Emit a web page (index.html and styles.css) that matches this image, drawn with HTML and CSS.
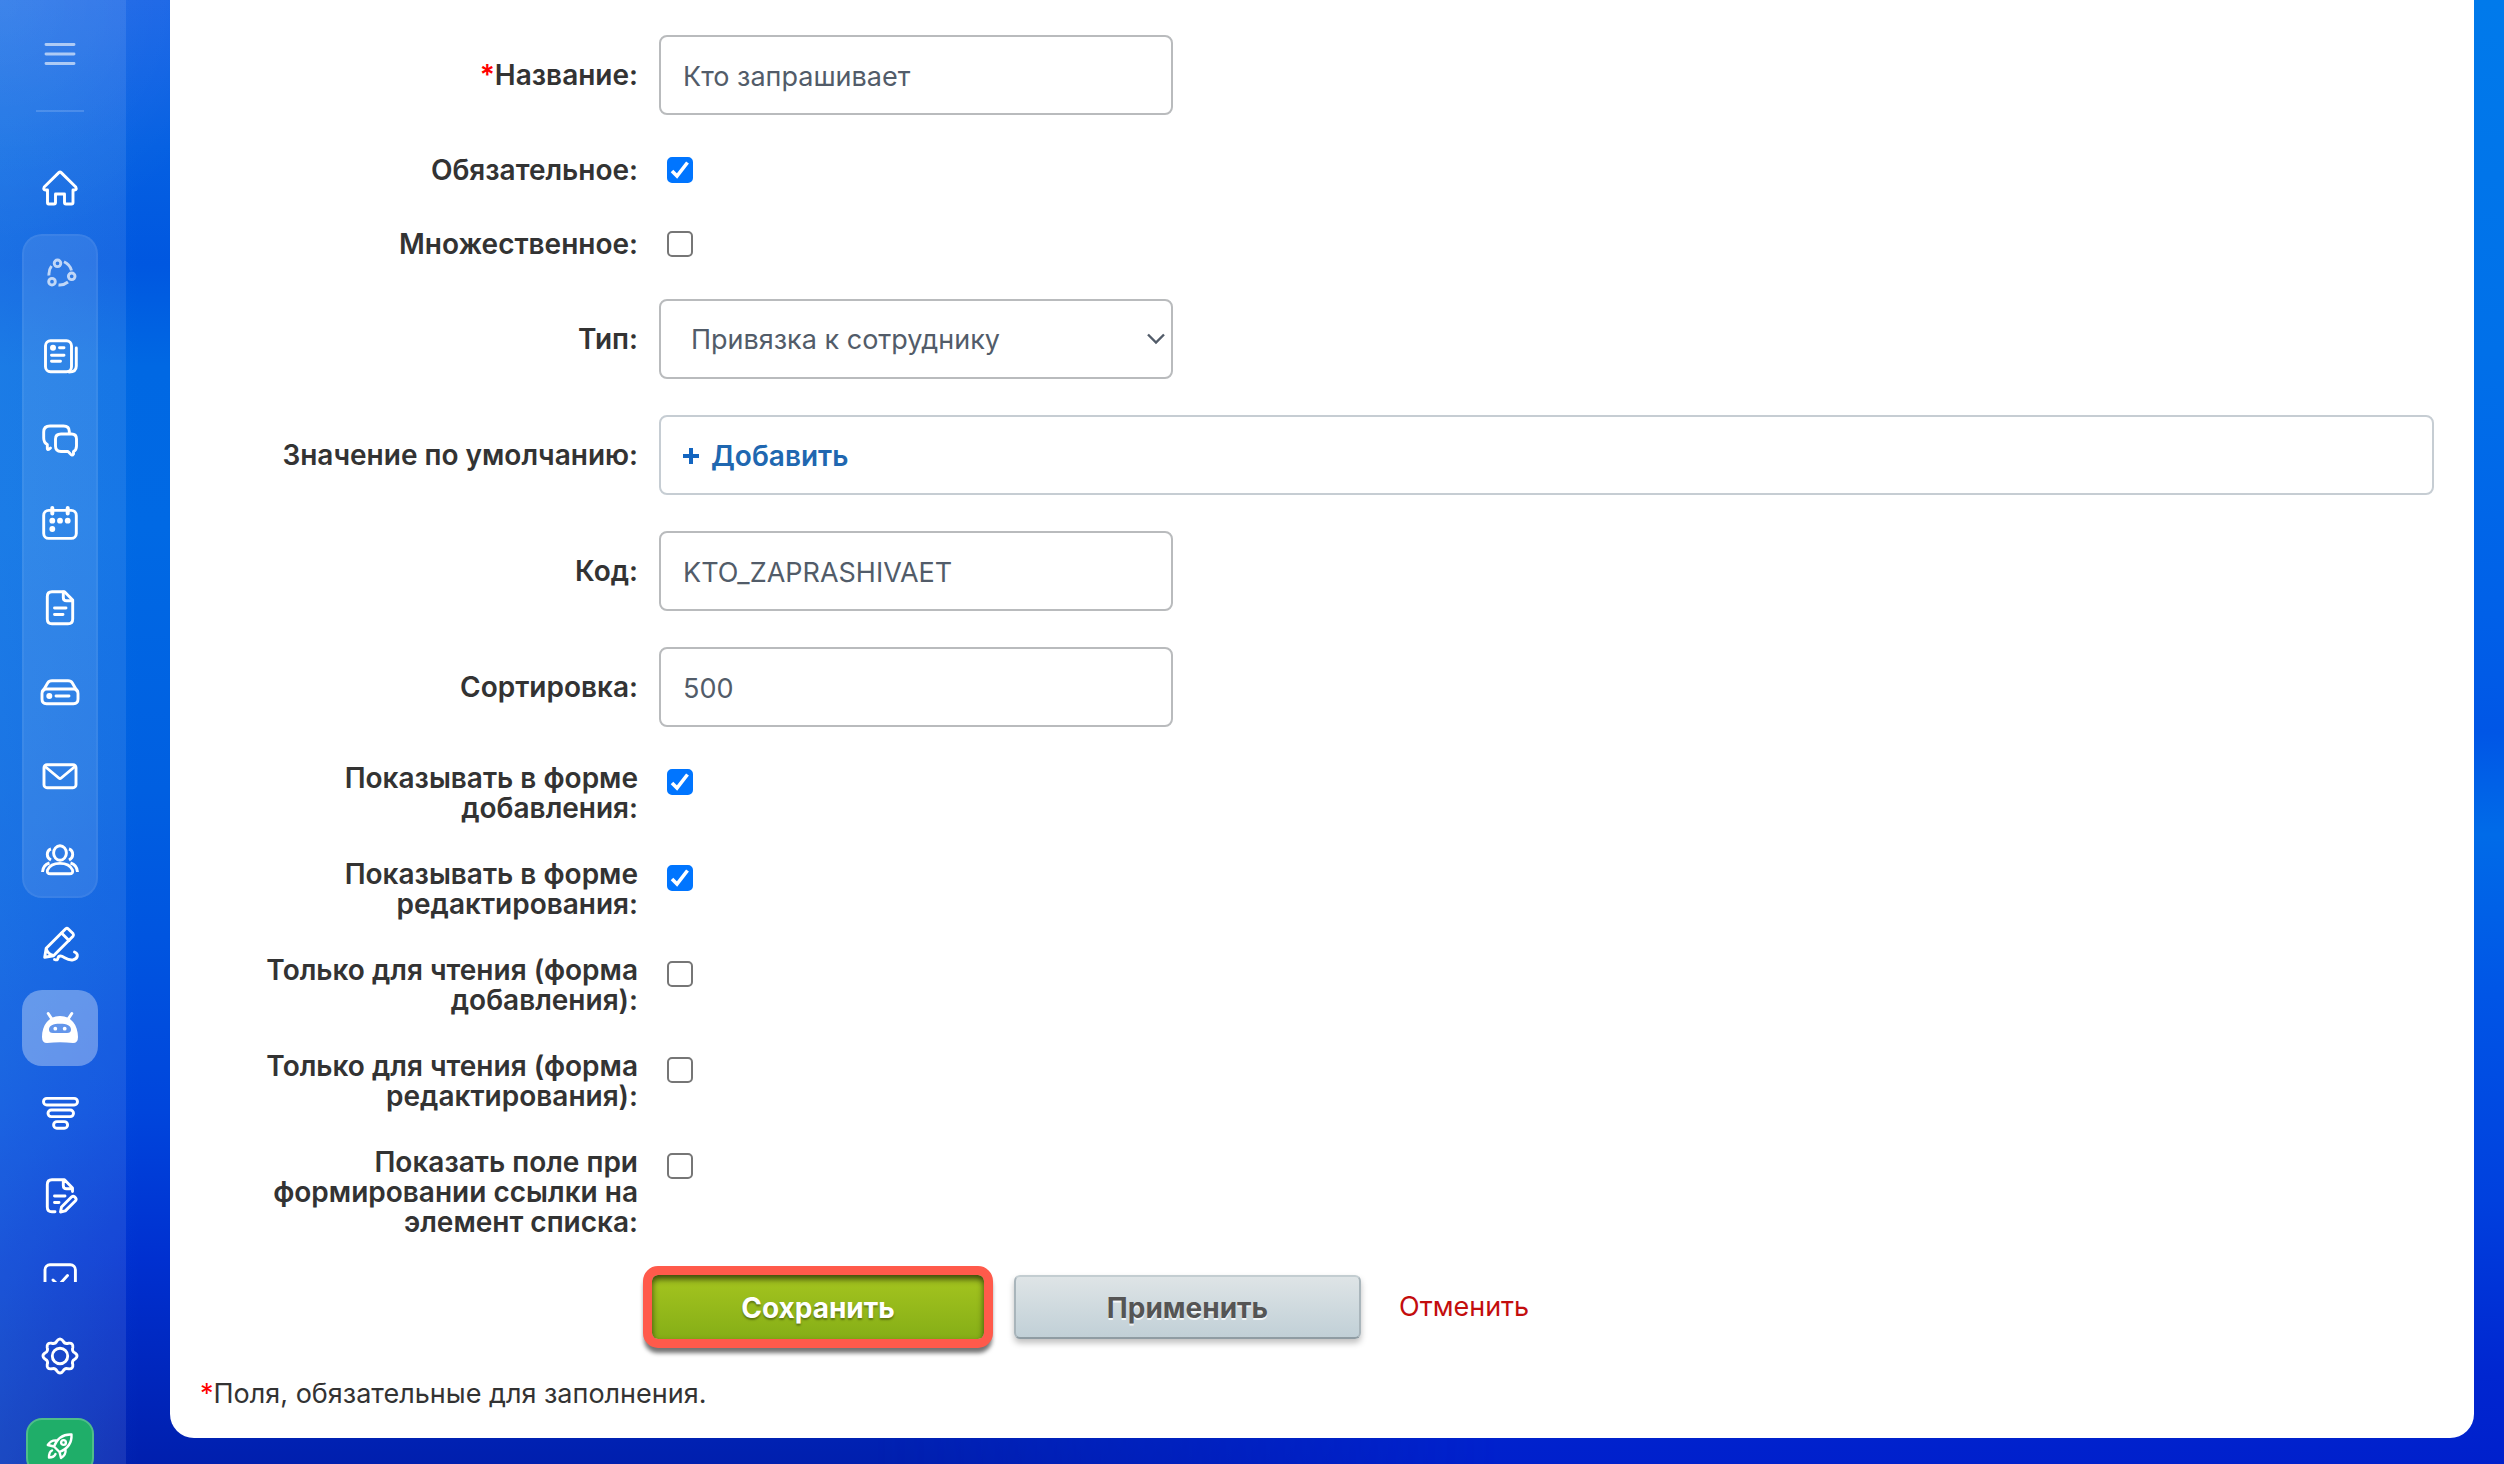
FILE: index.html
```html
<!DOCTYPE html>
<html lang="ru">
<head>
    <meta charset="UTF-8">
    <meta name="viewport" content="width=device-width, initial-scale=1.0">
    <title>Настройка поля</title>
    <link rel="stylesheet" href="styles.css">
</head>
<body>

    <aside class="sidebar">
        <div class="sidebar-header">
            <button type="button" class="menu-toggle" aria-label="Меню">
                <svg class="icon" viewBox="0 0 40 40"><path d="M6 10.5H34M6 20H34M6 29.5H34"/></svg>
            </button>
            <hr class="menu-divider">
        </div>

        <nav class="menu">
            <a class="menu-item" href="#" aria-label="Главная">
                <svg class="icon" viewBox="0 0 40 40"><path d="M18.8 4.6Q20 3.4 21.2 4.6L35.8 19Q37.2 22 34.5 22H33V34.5Q33 36 31.5 36H26Q24.5 36 24.5 34.5V26H15.5V34.5Q15.5 36 14 36H8.5Q7.500 36 7.500 34.5V22H5.500Q2.800 22 4.200 19Z"/></svg>
            </a>

            <div class="menu-group">
                <a class="menu-item menu-item-muted" href="#" aria-label="Совместная работа">
                    <svg class="icon" viewBox="0 0 40 40"><circle cx="17.500" cy="11.300" r="3.300"/><circle cx="31.700" cy="24.300" r="3.300"/><circle cx="12" cy="29.700" r="3.300"/><path class="butt" d="M24 9.800Q30 12.500 31.500 18.500M11.500 14Q8.500 18 9 23.500M18.500 33Q23.500 33.500 28 30"/></svg>
                </a>
                <a class="menu-item" href="#" aria-label="Лента">
                    <svg class="icon" viewBox="0 0 40 40"><rect x="5.500" y="4.700" width="26" height="31" rx="5"/><path d="M36.300 12V30Q36.300 36 29 36M19.500 11.700H24M11.500 19.300H24M11.500 25.300H20.500"/><circle class="dot" cx="13" cy="11.700" r="3"/></svg>
                </a>
                <a class="menu-item" href="#" aria-label="Чат">
                    <svg class="icon" viewBox="0 0 40 40"><path d="M29.300 13V11.500Q29.300 6 23.500 6H10Q3.700 6 3.700 12V18Q3.700 22.500 7.300 24.500V27Q7 31.500 10.500 28"/><path d="M21 14H31.500Q36.500 14 36.500 19V26Q36.500 30 33.500 31.500V34Q32 36.500 30 33.500L28 31.500H21Q15.500 31.500 15.500 26V19Q15.500 14 21 14Z"/></svg>
                </a>
                <a class="menu-item" href="#" aria-label="Календарь">
                    <svg class="icon" viewBox="0 0 40 40"><rect x="3.700" y="6.400" width="32.600" height="28" rx="5"/><path class="thick" d="M12.300 4V9.500M27.700 4V9.500"/><circle class="dot" cx="12.300" cy="16.700" r="2.900"/><circle class="dot" cx="20" cy="16.700" r="2.900"/><circle class="dot" cx="27.700" cy="16.700" r="2.900"/><circle class="dot" cx="12.300" cy="25" r="2.900"/></svg>
                </a>
                <a class="menu-item" href="#" aria-label="Документы">
                    <svg class="icon" viewBox="0 0 40 40"><path d="M24.500 3.700H12Q7.300 3.700 7.300 8.500V31Q7.300 35.800 12 35.800H28Q32.700 35.800 32.700 31V12Z"/><path d="M23.300 4V9.500Q23.300 12.800 26.500 12.800H32M14.500 20H26M14.500 26.500H23"/></svg>
                </a>
                <a class="menu-item" href="#" aria-label="Диск">
                    <svg class="icon" viewBox="0 0 40 40"><path d="M2 21.500Q2 17 6.500 17H33.500Q38 17 38 21.500V27Q38 31.700 33.500 31.700H6.500Q2 31.700 2 27Z"/><path d="M3 19L7.800 10.800Q9 8.700 12 8.700H28Q31 8.700 32.200 10.800L37 19M16 24H29"/><circle class="dot" cx="9.300" cy="24" r="3"/></svg>
                </a>
                <a class="menu-item" href="#" aria-label="Почта">
                    <svg class="icon" viewBox="0 0 40 40"><rect x="4" y="8.700" width="32" height="23" rx="3"/><path d="M5 10.500L18.800 22Q20 23 21.200 22L35 10.500"/></svg>
                </a>
                <a class="menu-item" href="#" aria-label="Группы">
                    <svg class="icon" viewBox="0 0 40 40"><ellipse cx="20" cy="13" rx="6.400" ry="7.200"/><path d="M10.500 33.800H29.500Q33.500 33.800 32.500 30Q29.500 23.400 20 23.400Q10.500 23.400 7.500 30Q6.500 33.800 10.500 33.800Z"/><path class="butt" d="M11 9Q7.300 10.200 7.300 14.500Q7.300 18 11 20M29 9Q32.700 10.200 32.700 14.500Q32.700 18 29 20M9.500 23Q3 25 2.500 32M30.500 23Q37 25 37.500 32"/></svg>
                </a>
            </div>

            <a class="menu-item" href="#" aria-label="Подпись">
                <svg class="icon" viewBox="0 0 40 40"><path d="M4.700 33.200L6.200 24.300L25.700 4.800Q27 3.700 28.300 5L33 9.500Q34 11 33 12.200L13.500 31.700Z"/><path d="M21.500 9L29 16.500M6.500 25.500Q8 30 13 31.500M14.500 35.500C20 37.500 16 32 20.500 32C24 32 27 37 33 35.800C38.500 34.500 38.500 29.500 34.500 28"/></svg>
            </a>
            <a class="menu-item menu-item-active" href="#" aria-label="Автоматизация">
                <svg class="icon" viewBox="0 0 40 40"><path d="M8.200 5.500L12.500 12M31.800 5.500L27.500 12"/><path class="dot" fill-rule="evenodd" d="M20 8C31 8 38 17 38 29Q38 35 33 35Q20 33.500 7 35Q2 35 2 29C2 17 9 8 20 8ZM20 15.700C13 15.700 9 17.500 9 21.500Q9 25 13 25H27Q31 25 31 21.500C31 17.500 27 15.700 20 15.700Z"/><circle class="dot" cx="15.300" cy="20.700" r="1.900"/><circle class="dot" cx="24.700" cy="20.700" r="1.900"/></svg>
            </a>
            <a class="menu-item" href="#" aria-label="CRM">
                <svg class="icon" viewBox="0 0 40 40"><rect x="3.500" y="6.400" width="34" height="6.600" rx="3.300"/><rect x="8" y="18" width="25.500" height="6.600" rx="3.300"/><rect x="13.600" y="29.600" width="14" height="6.600" rx="3.300"/></svg>
            </a>
            <a class="menu-item" href="#" aria-label="Договоры">
                <svg class="icon" viewBox="0 0 40 40"><path d="M15 35.800H12Q7.300 35.800 7.300 31V8.500Q7.300 3.700 12 3.700H24.500L32.500 12V15.500M23.300 4V9.500Q23.300 12.800 26.500 12.800H32M14.500 20H25M14.500 26.500H19"/><path d="M20.500 36L21.500 31L31.700 20.800Q33.200 19.600 34.600 20.800L35.600 21.900Q36.700 23.500 35.500 24.800L25.300 34.900Z"/></svg>
            </a>
            <a class="menu-item" href="#" aria-label="Задачи">
                <svg class="icon" viewBox="0 0 40 40"><rect x="5" y="4.700" width="30.400" height="31" rx="5"/><path d="M13 20L18.500 25.500L27.500 15.500"/></svg>
            </a>
        </nav>

        <div class="sidebar-footer">
            <a class="menu-item" href="#" aria-label="Настройки">
                <svg class="icon" viewBox="-20 -20 40 40"><circle r="7.700"/><path d="M15.100-3Q19 0 15.100 3Q11.400 4.700 12.800 8.600Q13.400 13.400 8.600 12.800Q4.700 11.400 3 15.100Q0 19-3 15.100Q-4.700 11.400-8.600 12.800Q-13.400 13.400-12.800 8.600Q-11.400 4.700-15.100 3Q-19 0-15.100-3Q-11.400-4.700-12.800-8.600Q-13.400-13.400-8.600-12.800Q-4.700-11.400-3-15.100Q0-19 3-15.100Q4.700-11.400 8.600-12.800Q13.400-13.400 12.800-8.600Q11.400-4.700 15.100-3Z"/></svg>
            </a>
            <a class="upgrade" href="#" aria-label="Мой тариф">
                <svg class="icon-small" viewBox="0 0 28 28"><path d="M25.500 2.500C17 2 11 7 8 14.500L13.500 20C21 17 26 11 25.500 2.500ZM11 8.500C7 8 4 9.500 1.800 13L8 14.500M19.500 17C20 21 18.500 24 15 26L13.500 20M6 18.500C3.500 19.500 3 22.500 3 25.500C6 25.500 8.500 24.500 9.500 22"/><circle cx="17.500" cy="10.500" r="2.400"/></svg>
            </a>
        </div>
    </aside>

    <main class="content">
        <form class="card">
            <div class="field">
                <label for="name"><span class="required">*</span>Название:</label>
                <input type="text" id="name" class="input-box" value="Кто запрашивает">
            </div>
            <div class="field">
                <label for="isRequired">Обязательное:</label>
                <input type="checkbox" id="isRequired" class="check" checked>
            </div>
            <div class="field">
                <label for="multiple">Множественное:</label>
                <input type="checkbox" id="multiple" class="check">
            </div>
            <div class="field">
                <label for="type">Тип:</label>
                <select id="type" class="input-box select-box">
                    <option>Привязка к сотруднику</option>
                </select>
            </div>
            <div class="field">
                <span class="field-title">Значение по умолчанию:</span>
                <div class="default-value">
                    <button type="button" class="add-btn">
                        <svg class="plus" viewBox="0 0 16 16"><path d="M8 0V16M0 8H16"/></svg>
                        Добавить
                    </button>
                </div>
            </div>
            <div class="field">
                <label for="code">Код:</label>
                <input type="text" id="code" class="input-box" value="KTO_ZAPRASHIVAET">
            </div>
            <div class="field">
                <label for="sort">Сортировка:</label>
                <input type="text" id="sort" class="input-box" value="500">
            </div>
            <div class="field">
                <label for="showAdd">Показывать в форме добавления:</label>
                <input type="checkbox" id="showAdd" class="check" checked>
            </div>
            <div class="field">
                <label for="showEdit">Показывать в форме редактирования:</label>
                <input type="checkbox" id="showEdit" class="check" checked>
            </div>
            <div class="field">
                <label for="readAdd">Только для чтения (форма добавления):</label>
                <input type="checkbox" id="readAdd" class="check">
            </div>
            <div class="field">
                <label for="readEdit">Только для чтения (форма редактирования):</label>
                <input type="checkbox" id="readEdit" class="check">
            </div>
            <div class="field">
                <label for="showLink">Показать поле при формировании ссылки на элемент списка:</label>
                <input type="checkbox" id="showLink" class="check">
            </div>

            <div class="buttons">
                <button type="submit" class="btn btn-save">Сохранить</button>
                <button type="button" class="btn btn-apply">Применить</button>
                <a class="cancel" href="#">Отменить</a>
            </div>

            <p class="note"><span class="required">*</span>Поля, обязательные для заполнения.</p>
        </form>
    </main>

</body>
</html>
```

FILE: styles.css
```css
* {
    box-sizing: border-box;
}
body {
    margin: 0;
    min-height: 100vh;
    display: flex;
    align-items: flex-start;
    position: relative;
    font-family: Inter, "Liberation Sans", sans-serif;
    font-size: 27px;
    line-height: 30px;
    color: #333;
    background:
        radial-gradient(circle at 0 0, rgba(255, 255, 255, 0.08), transparent 240px),
        linear-gradient(to right, rgba(20, 130, 230, 0.25), transparent 140px),
        linear-gradient(to bottom, #1b66e6 0%, #0560e2 10%, #0057e0 18%, #0068e3 25%, #0069e4 36%, #005fe1 54%, #0055e0 64%, #0045dc 76%, #0030d0 86%, #001fae 100%);
}
/* right side of the wallpaper */
body::before {
    content: "";
    position: absolute;
    inset: 0;
    z-index: -1;
    background: linear-gradient(to bottom, #007aeb 0%, #0070e9 24%, #0060e8 42%, #0056e6 50%, #006be8 57%, #0055e6 68%, #0040de 82%, #0026d0 94%, #0020cc 100%);
    mask-image: linear-gradient(to right, transparent 35%, #000 60%);
}

/* Sidebar */
.sidebar {
    position: sticky;
    top: 0;
    flex: none;
    width: 126px;
    height: 100vh;
    padding: 0 28px 0 22px;
    display: flex;
    flex-direction: column;
    overflow: hidden;
    background: rgba(255, 255, 255, 0.09);
}
.sidebar-header {
    flex: none;
    height: 150px;
    padding-top: 34px;
    display: flex;
    flex-direction: column;
    align-items: center;
}
.menu-toggle {
    display: flex;
    padding: 0;
    border: none;
    background: none;
    opacity: 0.6;
    cursor: pointer;
}
.menu-divider {
    width: 48px;
    height: 2px;
    margin: 36px 0 0;
    border: none;
    background: rgba(255, 255, 255, 0.16);
}
.menu {
    flex: 1;
    min-height: 0;
    display: flex;
    flex-direction: column;
    gap: 8px;
    overflow: hidden;
}
.menu-group {
    flex: none;
    display: flex;
    flex-direction: column;
    gap: 8px;
    border-radius: 20px;
    background: rgba(255, 255, 255, 0.1);
    box-shadow: inset 0 0 0 2px rgba(255, 255, 255, 0.05);
}
.menu-item {
    flex: none;
    height: 76px;
    display: flex;
    align-items: center;
    justify-content: center;
    border-radius: 20px;
}
.menu-item-muted {
    opacity: 0.7;
}
.menu-item-active {
    background: rgba(255, 255, 255, 0.33);
}
.sidebar-footer {
    flex: none;
    height: 182px;
    padding-top: 36px;
    display: flex;
    flex-direction: column;
    gap: 24px;
}
.upgrade {
    flex: none;
    align-self: center;
    width: 68px;
    height: 56px;
    display: flex;
    align-items: center;
    justify-content: center;
    border: 2px solid #4fbd89;
    border-radius: 16px;
    background: #1fae69;
}
.icon,
.icon-small {
    width: 40px;
    height: 40px;
    fill: none;
    stroke: #fff;
    stroke-width: 2.9;
    stroke-linecap: round;
    stroke-linejoin: round;
}
.icon-small {
    width: 28px;
    height: 28px;
    stroke-width: 2.4;
}
.icon .butt {
    stroke-linecap: butt;
}
.icon .thick {
    stroke-width: 4;
}
.icon .dot {
    fill: #fff;
    stroke: none;
}

/* Form */
.content {
    flex: 1;
    padding: 0 30px 26px 44px;
}
.card {
    padding: 17px 40px 29px 30px;
    border-radius: 0 0 24px 24px;
    background: #fff;
}
.field {
    display: grid;
    grid-template-columns: 380px 1fr;
    column-gap: 21px;
    align-items: center;
    padding: 18px 0 18px 58px;
}
.field label,
.field-title {
    font-size: 28px;
    font-weight: 600;
    text-align: right;
}
.required {
    color: #f00;
}
.input-box,
.default-value {
    width: 514px;
    height: 80px;
    padding: 2px 22px 0;
    border: 2px solid #b9bbbd;
    border-radius: 8px;
    background-color: #fff;
    color: #525c69;
    font: inherit;
}
.select-box {
    appearance: none;
    padding: 2px 30px 0;
    background-image: url("data:image/svg+xml,%3Csvg xmlns='http://www.w3.org/2000/svg' viewBox='0 0 18 12' fill='none' stroke='%23525c69' stroke-width='2.4'%3E%3Cpath d='M1 1.500L9 9.500L17 1.500'/%3E%3C/svg%3E");
    background-repeat: no-repeat;
    background-position: right 6px center;
    background-size: 18px 12px;
}
.default-value {
    width: auto;
    display: flex;
    align-items: center;
    border-color: #c6cdd3;
}
.add-btn {
    display: flex;
    align-items: center;
    gap: 12px;
    padding: 0;
    border: none;
    background: none;
    color: #2067b0;
    font: inherit;
    font-size: 28px;
    font-weight: 600;
    cursor: pointer;
}
.plus {
    width: 16px;
    height: 16px;
    stroke: #1365c0;
    stroke-width: 4;
}
.check {
    appearance: none;
    width: 26px;
    height: 26px;
    margin: 6px 8px;
    align-self: start;
    border: 2px solid #767676;
    border-radius: 5px;
    background: #fff;
}
.check:checked {
    border-color: #0075ff;
    background: #0075ff url("data:image/svg+xml,%3Csvg xmlns='http://www.w3.org/2000/svg' viewBox='0 0 22 22' fill='none' stroke='white' stroke-width='3.6'%3E%3Cpath d='M3 12L8 17L18.500 3.500'/%3E%3C/svg%3E") center / 22px 22px no-repeat;
}

/* Buttons */
.buttons {
    display: flex;
    align-items: center;
    gap: 30px;
    margin: 20px 0 0 452px;
}
.btn {
    height: 64px;
    padding: 2px 0 0;
    border-radius: 6px;
    font: inherit;
    font-size: 28px;
    font-weight: 700;
    cursor: pointer;
}
/* the default action is outlined */
.btn-save {
    width: 332px;
    border: none;
    color: #fff;
    text-shadow: 0 2px 2px rgba(0, 0, 0, 0.35);
    background: linear-gradient(#a5c51f, #85ae17);
    outline: 9px solid #ff5a4b;
    box-shadow: inset 0 4px 6px rgba(0, 0, 0, 0.65), 0 6px 4px 8px rgba(0, 0, 0, 0.55);
}
.btn-apply {
    width: 347px;
    border: 2px solid #a9b5bb;
    border-top-color: #c3cdd1;
    border-bottom-color: #8f9ca3;
    color: #555;
    text-shadow: 0 2px 0 rgba(255, 255, 255, 0.8);
    background: linear-gradient(#dee4e6, #c1d0d7);
    box-shadow: 0 4px 6px rgba(0, 0, 0, 0.25);
}
.cancel {
    margin-left: 8px;
    color: #c30d0d;
    text-decoration: none;
}
.note {
    margin: 40px 0 0;
}
```
